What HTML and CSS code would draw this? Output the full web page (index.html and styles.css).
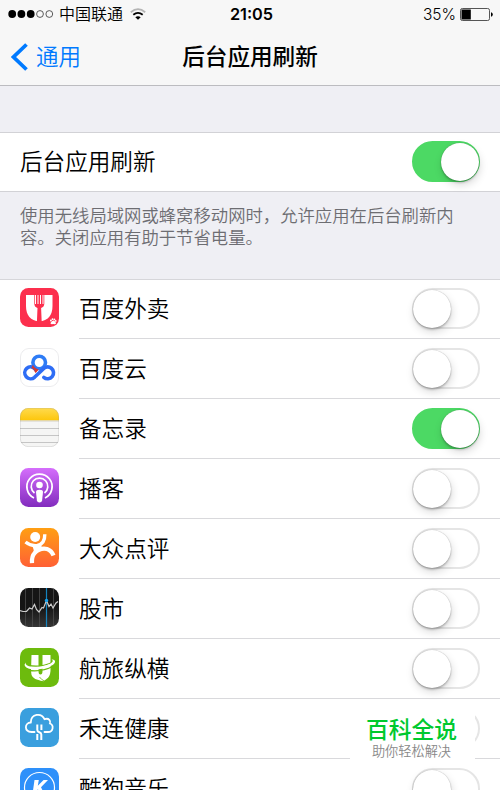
FILE: index.html
```html
<!DOCTYPE html>
<html lang="zh-CN">

<head>
    <title>后台应用刷新</title>
    <meta charset="UTF-8">
    <meta name="viewport" content="width=device-width, initial-scale=1.0">
    <link rel="stylesheet" href="styles.css">
</head>

<body>
    <header>
        <div class="status">
            <div class="carrier">
                <svg width="46" height="10" viewBox="0 0 46 10">
                    <circle cx="4.2" cy="5" r="3.9" />
                    <circle cx="13.4" cy="5" r="3.9" />
                    <circle cx="22.7" cy="5" r="3.9" />
                    <circle cx="32" cy="5" r="3.4" fill="none" stroke="#333" stroke-width=".8" />
                    <circle cx="41.3" cy="5" r="3.4" fill="none" stroke="#333" stroke-width=".8" />
                </svg>
                <span>中国联通</span>
                <svg class="wifi" width="16" height="12" viewBox="0 0 16 12" fill="none" stroke-width="1.8">
                    <path d="M.8 4.200Q8-1.900 15.200 4.200" stroke="#b5b5b5" />
                    <path d="M3.300 6.800Q8 3 12.700 6.800" stroke="#000" />
                    <path d="M8 11.800L5.300 9.200Q8 7.200 10.700 9.200z" fill="#000" />
                </svg>
            </div>
            <time>21:05</time>
            <div class="power">
                <span>35%</span>
                <svg width="33" height="13" viewBox="0 0 33 13">
                    <rect x=".5" y=".5" width="29" height="12" rx="1.8" fill="none" stroke="#555" />
                    <rect x="1.5" y="1.5" width="9.3" height="10" />
                    <path d="M31 4.2q1.800.5 1.800 2.300T31 8.800z" />
                </svg>
            </div>
        </div>
        <nav>
            <a class="back">
                <svg width="17" height="28" viewBox="0 0 17 28">
                    <path d="M15.500 1.500L2.500 14l13 12.500" fill="none" stroke="#007aff" stroke-width="3.800" />
                </svg>
                <span>通用</span>
            </a>
            <h1>后台应用刷新</h1>
        </nav>
    </header>

    <section class="master">
        <span>后台应用刷新</span>
        <i class="switch on"></i>
    </section>
    <p class="note">使用无线局域网或蜂窝移动网时，允许应用在后台刷新内容。关闭应用有助于节省电量。</p>

    <ul class="apps">
        <li>
            <svg class="icon" viewBox="0 0 39 39">
                <rect width="39" height="39" rx="8.500" fill="#fc2f4d" />
                <path d="M6 7h26.500v11c0 9-4.500 15-13.200 15.300C10.500 33 6 27 6 18z" fill="#fff" />
                <path d="M14.300 6h10v9.500q0 3.500-3.200 4.500l.6 14h-4.800l.6-14q-3.200-1-3.200-4.500z" fill="#fc2f4d" />
                <path d="M15.500 7v9M18 7v9M20.500 7v9M23 7v9" stroke="#fff" stroke-width="1" />
                <path d="M30.500 35q3-5 5.500 0 .5 1.500-2.800 1-3.200.5-2.700-1z" fill="#fff" />
                <g fill="#fff">
                    <circle cx="30.900" cy="32.500" r=".9" />
                    <circle cx="32.500" cy="31.200" r=".9" />
                    <circle cx="34.400" cy="31.400" r=".9" />
                    <circle cx="35.700" cy="32.900" r=".9" />
                </g>
            </svg>
            <div><span>百度外卖</span><i class="switch"></i></div>
        </li>
        <li>
            <svg class="icon" viewBox="0 0 39 39" fill="none" stroke-width="3.600">
                <rect x=".5" y=".5" width="38" height="38" rx="8.500" fill="#fff" stroke="#ececee" stroke-width="1" />
                <circle cx="19.200" cy="14.500" r="6.300" stroke="#2e7cf6" />
                <path d="M13 17q1 3 5.500 4.500L15.500 25q-1.800-3.800-4.600-5z" fill="#d8392f" />
                <path d="M15 20.800A5.900 5.900 0 1 0 14.500 29.300L23 21.200A5.900 5.900 0 1 1 23.800 29.300" stroke="#2e6df5" stroke-linecap="round" stroke-linejoin="round" />
                <path d="M13 17q1 3 5.500 4.500L16 24.500q-1.800-3.800-4.600-4.800z" fill="#d8392f" />
            </svg>
            <div><span>百度云</span><i class="switch"></i></div>
        </li>
        <li>
            <svg class="icon" viewBox="0 0 39 39">
                <defs>
                    <clipPath id="tile">
                        <rect width="39" height="39" rx="8.500" />
                    </clipPath>
                    <linearGradient id="yellow" x2="0" y2="1">
                        <stop stop-color="#ffdb4f" />
                        <stop offset="1" stop-color="#fdc60a" />
                    </linearGradient>
                </defs>
                <g clip-path="url(#tile)">
                    <path d="M0 0h39v39H0z" fill="#f5f5f4" />
                    <path d="M0 0h39v12.500H0z" fill="url(#yellow)" />
                    <path d="M0 13h39" stroke="#d3d0c4" />
                    <path d="M0 20.500h39M0 27.500h39M0 34.500h39" stroke="#bfbfbf" stroke-width=".9" />
                </g>
                <rect x=".3" y=".3" width="38.400" height="38.400" rx="8.300" fill="none" stroke="#999" stroke-width=".5" opacity=".5" />
            </svg>
            <div><span>备忘录</span><i class="switch on"></i></div>
        </li>
        <li>
            <svg class="icon" viewBox="0 0 39 39" fill="none">
                <linearGradient id="purple" x2="0" y2="1">
                    <stop stop-color="#d56efc" />
                    <stop offset="1" stop-color="#822cbe" />
                </linearGradient>
                <rect width="39" height="39" rx="8.500" fill="url(#purple)" />
                <path d="M14 30A12.600 12.600 0 1 1 25 30" stroke="#fff" stroke-width="1.700" />
                <path d="M14.500 25A8.300 8.300 0 1 1 24.500 25" stroke="#fff" stroke-width="1.700" />
                <circle cx="19.500" cy="17" r="3.300" fill="#fff" />
                <path d="M16 24q0-2.300 3.500-2.300T23 24l-.9 8.500q-.3 2-2.600 2t-2.600-2z" fill="#fff" />
            </svg>
            <div><span>播客</span><i class="switch"></i></div>
        </li>
        <li>
            <svg class="icon" viewBox="0 0 39 39" fill="none">
                <linearGradient id="orange" x2="0" y2="1">
                    <stop stop-color="#ff9f13" />
                    <stop offset="1" stop-color="#ff6035" />
                </linearGradient>
                <rect width="39" height="39" rx="8.500" fill="url(#orange)" />
                <circle cx="15.200" cy="9" r="5" fill="#fff" />
                <path d="M5.500 14q5.500 4.500 12 3.500Q25 15.500 24.800 6.200" stroke="#fff" stroke-width="3.400" />
                <path d="M12 35.200q-.5-7 2.700-10.200Q20 19.500 27 21q4.500 1.500 6.500 6.500" stroke="#fff" stroke-width="4.200" />
                <path d="M12.500 18l7.500-1.500 3 4-9.500 6.500q1-5-1-9z" fill="#fff" />
            </svg>
            <div><span>大众点评</span><i class="switch"></i></div>
        </li>
        <li>
            <svg class="icon" viewBox="0 0 39 39" fill="none">
                <linearGradient id="dark" x2="0" y2="1">
                    <stop offset=".5" stop-color="#151515" />
                    <stop offset="1" stop-color="#353535" />
                </linearGradient>
                <rect width="39" height="39" rx="8.500" fill="url(#dark)" />
                <path d="M5.500 1v37M12.500 0v39M19.500 0v39M33.500 1v37" stroke="#4c4c4c" stroke-width=".8" />
                <path d="M26.500 0v39" stroke="#1583bd" stroke-width="1.200" />
                <path d="M0 22.500l3 1 3.500 0L9.500 20l2.500 1 2.500-4.500 2 5 2.500 2.500 3-4.500 1.500.5 3-7.500 2.500 6 2-2.500 2 4 3-5 2-1.500"
                    stroke="#ccc" stroke-width="1.200" />
                <circle cx="26.500" cy="12.500" r="1.700" fill="#15a1ec" />
            </svg>
            <div><span>股市</span><i class="switch"></i></div>
        </li>
        <li>
            <svg class="icon" viewBox="0 0 39 39" fill="none">
                <rect width="39" height="39" rx="8.500" fill="#6dbb0d" />
                <path d="M11.500 7h7v16q0 3.500 2 3.500t2-3.500V7h8v16q-.5 6-4 8l-3 2.300q-3-.3-5-1.300-7.500-1-7.500-9z" fill="#fff" />
                <path d="M19.500 29q2 3 5 4" stroke="#6dbb0d" stroke-width=".8" />
                <path d="M8 17.500q14 2.500 25-3.500M8 22.300q14 2 25-4" stroke="#6dbb0d" stroke-width="1.300" />
                <path d="M5.500 14.500Q2.500 18.500 9 20.700c10 2.500 27-2.200 26-7.700q-.5-2-3.500-1.500 3 1.500-1 4Q22 19.300 12 18.800q-7-.8-6.500-4.300z" fill="#fff" />
            </svg>
            <div><span>航旅纵横</span><i class="switch"></i></div>
        </li>
        <li>
            <svg class="icon" viewBox="0 0 39 39" fill="none">
                <rect width="39" height="39" rx="8.500" fill="#3a9fde" />
                <path d="M14.500 24h-3C4 23.500 4.300 14.800 10.800 14.500 11 5.500 21.500 4.500 24.500 11.200 29 9.500 31 13 30 15.500 34 17 33.500 24 28 24h-3.500"
                    stroke="#fff" stroke-width="1.800" stroke-linecap="round" />
                <path d="M17.300 16.500V22q0 1.500 2 2.300t2 2.200V32M21.400 16.500V22M17.300 32v-6" stroke="#fff" stroke-width="2" />
            </svg>
            <div><span>禾连健康</span><i class="switch"></i></div>
        </li>
        <li>
            <svg class="icon" viewBox="0 0 39 39" fill="none">
                <rect width="39" height="39" rx="8.500" fill="#2e90fa" />
                <circle cx="19.500" cy="19.500" r="15" stroke="#fff" stroke-width="1.200" />
                <path d="M14.500 12h4.300l-1 5.700 5.800-5.700h4.400l-7 7.200 4.300 8.800H21l-3.200-7L16.500 28h-4.300z" fill="#fff" />
            </svg>
            <div><span>酷狗音乐</span><i class="switch"></i></div>
        </li>
    </ul>

    <aside class="brand">
        <strong>百科全说</strong>
        <small>助你轻松解决</small>
    </aside>
</body>

</html>
```
FILE: styles.css
```css
* {
    box-sizing: border-box;
}

body {
    position: relative;
    margin: 0;
    width: 500px;
    height: 790px;
    overflow: hidden;
    background: #efeff4;
    color: #000;
    font-family: Inter, "Noto Sans CJK SC", sans-serif;
    font-weight: 350;
}

header {
    height: 86px;
    background: #f7f7f7;
    border-bottom: 1px solid #bcbcc0;
}

/* equal outer columns keep the middle one centred */
.status,
nav {
    display: grid;
    grid-template-columns: 1fr auto 1fr;
    align-items: center;
}

.status {
    height: 28px;
    padding: 0 7px 0 8px;
    font-size: 16px;
}

.status time {
    padding-left: 2px;
    font-size: 16.3px;
    font-weight: 600;
}

.carrier,
.power {
    display: flex;
    align-items: center;
}

.carrier {
    gap: 5px;
}

.carrier span {
    margin-bottom: 2px;
}

.wifi {
    margin-left: 2px;
}

.power {
    justify-content: flex-end;
    gap: 4px;
    font-size: 15.5px;
}

nav {
    height: 57px;
    padding: 0 11px;
}

.back {
    display: flex;
    align-items: center;
    gap: 8px;
    color: #007aff;
    font-size: 22.5px;
}

.back span {
    margin-bottom: 4px;
}

h1 {
    margin: 0 0 2px;
    font-size: 22.6px;
    font-weight: 500;
}

.master {
    display: flex;
    align-items: center;
    justify-content: space-between;
    height: 60px;
    margin-top: 46px;
    padding: 0 20px 1px;
    background: #fff;
    border: solid #d2d2d6;
    border-width: 1px 0;
    font-size: 22.6px;
}

.master span {
    margin-bottom: 3px;
}

.note {
    height: 87px;
    margin: 0;
    padding: 13px 40px 0 20px;
    color: #6d6d72;
    font-size: 17.35px;
    line-height: 21.5px;
}

.apps {
    margin: 0;
    padding: 0;
    background: #fff;
    box-shadow: inset 0 1px #d6d6da;
    list-style: none;
    font-size: 22.6px;
}

.apps li {
    display: flex;
    height: 60px;
    padding-left: 20px;
}

.apps li div {
    display: flex;
    flex: 1;
    align-items: center;
    justify-content: space-between;
    height: 60px;
    margin-left: 20px;
    padding-right: 20px;
    border-bottom: 1px solid #d9d9dc;
}

.apps span {
    margin-bottom: 2px;
}

.icon {
    width: 39px;
    height: 39px;
    margin-top: 9px;
}

.switch {
    display: block;
    width: 68px;
    height: 41px;
    padding: 1px;
    border: 2px solid #e5e5e5;
    border-radius: 21px;
    background: #fff;
}

.switch::before {
    content: "";
    display: block;
    width: 38px;
    height: 38px;
    margin: -1px 0 0 -2px;
    border-radius: 50%;
    background: #fff;
    box-shadow: 0 0 1px rgba(0, 0, 0, .35), 0 2px 2px rgba(0, 0, 0, .18), 1px 4px 9px rgba(0, 0, 0, .15);
}

.on {
    background: #4cd964;
    border-color: #4cd964;
}

.on::before {
    margin-left: 26px;
}

.brand {
    position: absolute;
    left: 350px;
    top: 702px;
    display: flex;
    flex-direction: column;
    align-items: center;
    width: 125px;
    height: 60px;
    padding: 12px 2px 0 0;
    background: #fff;
}

.brand strong {
    color: #00c92f;
    font-size: 22.8px;
    font-weight: 500;
    line-height: 31px;
}

.brand small {
    color: #888;
    font-size: 13.2px;
    line-height: 13px;
}
```
